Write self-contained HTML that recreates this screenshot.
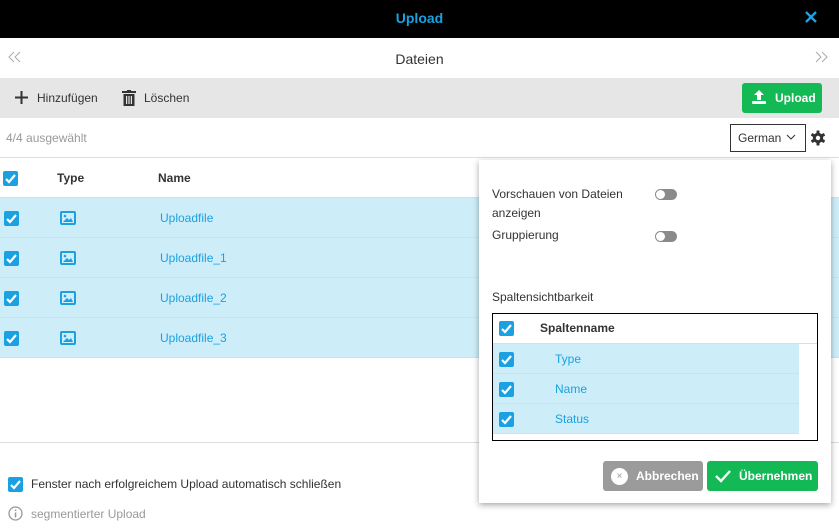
<!DOCTYPE html>
<html><head><meta charset="utf-8"><style>
*{box-sizing:border-box;margin:0;padding:0}
body{width:839px;height:530px;position:relative;overflow:hidden;background:#fff;font-family:"Liberation Sans",sans-serif;font-size:12px;color:#333}
.a{position:absolute}
.cb{position:absolute;width:15px;height:15px;background:#1ba1e2;border-radius:2px}
.cb svg{position:absolute;left:2px;top:2px}
.row{position:absolute;left:0;width:839px;height:40px;background:#cdeef9;border-bottom:1px solid #dcdcdc}
.lnk{color:#1ba1e2}
.tg{position:absolute;width:22px;height:11px;border-radius:6px;background:#8a8a8a}
.tg:after{content:"";position:absolute;left:1px;top:1px;width:9px;height:9px;border-radius:50%;background:#fff}
</style></head><body>
<div class="a" style="left:0;top:0;width:839px;height:38px;background:#000"></div>
<div class="a" style="left:0;top:10px;width:839px;text-align:center;color:#1ba1e2;font-weight:bold;font-size:14px">Upload</div>
<svg class="a" style="left:805px;top:11px" width="12" height="12"><path d="M1 1 L11 11 M11 1 L1 11" stroke="#1ba1e2" stroke-width="2.4"/></svg>
<svg class="a" style="left:8px;top:51px" width="14" height="12"><path d="M6 1 L1 6 L6 11 M12 1 L7 6 L12 11" stroke="#aaa" stroke-width="1" fill="none"/></svg>
<svg class="a" style="left:814px;top:51px" width="14" height="12"><path d="M2 1 L7 6 L2 11 M8 1 L13 6 L8 11" stroke="#aaa" stroke-width="1" fill="none"/></svg>
<div class="a" style="left:0;top:51px;width:839px;text-align:center;font-size:14px;color:#333">Dateien</div>
<div class="a" style="left:0;top:78px;width:839px;height:40px;background:#e6e6e6"></div>
<svg class="a" style="left:15px;top:91px" width="13" height="13"><path d="M6.5 0 V13 M0 6.5 H13" stroke="#333" stroke-width="2"/></svg>
<div class="a" style="left:37px;top:91px;color:#333">Hinzufügen</div>
<svg class="a" style="left:122px;top:90px" width="14" height="16" viewBox="0 0 14 16"><rect x="0" y="1" width="14" height="2" fill="#333"/><rect x="5" y="0" width="4" height="2" fill="#333"/><rect x="1.5" y="4" width="11" height="12" fill="#333"/><rect x="4" y="6" width="1.2" height="8" fill="#e6e6e6"/><rect x="6.4" y="6" width="1.2" height="8" fill="#e6e6e6"/><rect x="8.8" y="6" width="1.2" height="8" fill="#e6e6e6"/></svg>
<div class="a" style="left:144px;top:91px;color:#333">Löschen</div>
<div class="a" style="left:742px;top:83px;width:80px;height:30px;background:#13b955;border-radius:3px"></div>
<svg class="a" style="left:751px;top:89px" width="16" height="16" viewBox="0 0 16 16"><path d="M8 1 L3 6 H6 V11 H10 V6 H13 Z" fill="#fff"/><rect x="1" y="12" width="14" height="3" rx="1" fill="#fff"/></svg>
<div class="a" style="left:775px;top:91px;color:#fff;font-weight:bold">Upload</div>
<div class="a" style="left:6px;top:131px;color:#999">4/4 ausgewählt</div>
<div class="a" style="left:730px;top:124px;width:76px;height:28px;border:1px solid #333"></div>
<div class="a" style="left:738px;top:131px;color:#333">German</div>
<svg class="a" style="left:786px;top:134px" width="10" height="6"><path d="M1 1 L5 5 L9 1" stroke="#333" fill="none"/></svg>
<svg class="a" style="left:810px;top:130px" width="16" height="16" viewBox="0 0 16 16"><g fill="#333"><circle cx="8" cy="8" r="5.2"/><rect x="6.5" y="0.5" width="3" height="15" rx="0.6"/><rect x="6.5" y="0.5" width="3" height="15" rx="0.6" transform="rotate(60 8 8)"/><rect x="6.5" y="0.5" width="3" height="15" rx="0.6" transform="rotate(120 8 8)"/></g><circle cx="8" cy="8" r="2.2" fill="#fff"/></svg>
<div class="a" style="left:0;top:157px;width:839px;height:1px;background:#ddd"></div>
<div class="cb" style="left:3px;top:171px"><svg width="11" height="11"><path d="M1 6 L4 9 L10 2" stroke="#fff" stroke-width="2.2" fill="none"/></svg></div>
<div class="a" style="left:57px;top:171px;font-weight:bold">Type</div>
<div class="a" style="left:158px;top:171px;font-weight:bold">Name</div>
<div class="a" style="left:0;top:197px;width:839px;height:1px;background:#ddd"></div>
<div class="row" style="top:198px"></div><div class="row" style="top:238px"></div><div class="row" style="top:278px"></div><div class="row" style="top:318px"></div>
<div class="cb" style="left:4px;top:211px"><svg width="11" height="11"><path d="M1 6 L4 9 L10 2" stroke="#fff" stroke-width="2.2" fill="none"/></svg></div>
<div class="cb" style="left:4px;top:251px"><svg width="11" height="11"><path d="M1 6 L4 9 L10 2" stroke="#fff" stroke-width="2.2" fill="none"/></svg></div>
<div class="cb" style="left:4px;top:291px"><svg width="11" height="11"><path d="M1 6 L4 9 L10 2" stroke="#fff" stroke-width="2.2" fill="none"/></svg></div>
<div class="cb" style="left:4px;top:331px"><svg width="11" height="11"><path d="M1 6 L4 9 L10 2" stroke="#fff" stroke-width="2.2" fill="none"/></svg></div>
<svg class="a" style="left:60px;top:211px" width="16" height="14"><rect x="1" y="1" width="14" height="12" rx="1" fill="none" stroke="#1ba1e2" stroke-width="2"/><path d="M3 11 L7 7 L9 9 L11 7 L13 11Z" fill="#1ba1e2"/><circle cx="5" cy="5" r="1.3" fill="#1ba1e2"/></svg>
<svg class="a" style="left:60px;top:251px" width="16" height="14"><rect x="1" y="1" width="14" height="12" rx="1" fill="none" stroke="#1ba1e2" stroke-width="2"/><path d="M3 11 L7 7 L9 9 L11 7 L13 11Z" fill="#1ba1e2"/><circle cx="5" cy="5" r="1.3" fill="#1ba1e2"/></svg>
<svg class="a" style="left:60px;top:291px" width="16" height="14"><rect x="1" y="1" width="14" height="12" rx="1" fill="none" stroke="#1ba1e2" stroke-width="2"/><path d="M3 11 L7 7 L9 9 L11 7 L13 11Z" fill="#1ba1e2"/><circle cx="5" cy="5" r="1.3" fill="#1ba1e2"/></svg>
<svg class="a" style="left:60px;top:331px" width="16" height="14"><rect x="1" y="1" width="14" height="12" rx="1" fill="none" stroke="#1ba1e2" stroke-width="2"/><path d="M3 11 L7 7 L9 9 L11 7 L13 11Z" fill="#1ba1e2"/><circle cx="5" cy="5" r="1.3" fill="#1ba1e2"/></svg>
<div class="a lnk" style="left:160px;top:211px">Uploadfile</div>
<div class="a lnk" style="left:160px;top:251px">Uploadfile_1</div>
<div class="a lnk" style="left:160px;top:291px">Uploadfile_2</div>
<div class="a lnk" style="left:160px;top:331px">Uploadfile_3</div>
<div class="a" style="left:0;top:442px;width:839px;height:1px;background:#ddd"></div>
<div class="cb" style="left:8px;top:477px"><svg width="11" height="11"><path d="M1 6 L4 9 L10 2" stroke="#fff" stroke-width="2.2" fill="none"/></svg></div>
<div class="a" style="left:31px;top:477px;color:#333">Fenster nach erfolgreichem Upload automatisch schließen</div>
<svg class="a" style="left:8px;top:506px" width="15" height="15"><circle cx="7.5" cy="7.5" r="6.5" fill="none" stroke="#999" stroke-width="1.3"/><rect x="6.8" y="6.5" width="1.5" height="5" fill="#999"/><rect x="6.8" y="3.5" width="1.5" height="1.5" fill="#999"/></svg>
<div class="a" style="left:31px;top:507px;color:#999">segmentierter Upload</div>

<div class="a" style="left:479px;top:160px;width:352px;height:343px;background:#fff;box-shadow:0 2px 6px rgba(0,0,0,.35)"></div>
<div class="a" style="left:492px;top:185px;line-height:19px;color:#333">Vorschauen von Dateien<br>anzeigen</div>
<div class="tg" style="left:655px;top:189px"></div>
<div class="a" style="left:492px;top:228px;color:#333">Gruppierung</div>
<div class="tg" style="left:655px;top:231px"></div>
<div class="a" style="left:492px;top:290px;color:#333">Spaltensichtbarkeit</div>
<div class="a" style="left:492px;top:313px;width:326px;height:128px;border:1px solid #000"></div>
<div class="cb" style="left:499px;top:321px"><svg width="11" height="11"><path d="M1 6 L4 9 L10 2" stroke="#fff" stroke-width="2.2" fill="none"/></svg></div>
<div class="a" style="left:540px;top:321px;font-weight:bold">Spaltenname</div>
<div class="a" style="left:493px;top:343px;width:324px;height:1px;background:#ddd"></div>
<div class="a" style="left:493px;top:344px;width:306px;height:30px;background:#cdeef9;border-bottom:1px solid #ddd"></div>
<div class="a" style="left:493px;top:374px;width:306px;height:30px;background:#cdeef9;border-bottom:1px solid #ddd"></div>
<div class="a" style="left:493px;top:404px;width:306px;height:30px;background:#cdeef9;border-bottom:1px solid #ddd"></div>
<div class="cb" style="left:499px;top:352px"><svg width="11" height="11"><path d="M1 6 L4 9 L10 2" stroke="#fff" stroke-width="2.2" fill="none"/></svg></div>
<div class="cb" style="left:499px;top:382px"><svg width="11" height="11"><path d="M1 6 L4 9 L10 2" stroke="#fff" stroke-width="2.2" fill="none"/></svg></div>
<div class="cb" style="left:499px;top:412px"><svg width="11" height="11"><path d="M1 6 L4 9 L10 2" stroke="#fff" stroke-width="2.2" fill="none"/></svg></div>
<div class="a lnk" style="left:555px;top:352px">Type</div>
<div class="a lnk" style="left:555px;top:382px">Name</div>
<div class="a lnk" style="left:555px;top:412px">Status</div>
<div class="a" style="left:603px;top:461px;width:100px;height:30px;background:#9b9b9b;border-radius:3px"></div>
<div class="a" style="left:611px;top:468px;width:17px;height:17px;border-radius:50%;background:#fff;color:#999;font-size:10px;text-align:center;line-height:17px">×</div>
<div class="a" style="left:636px;top:469px;color:#fff;font-weight:bold">Abbrechen</div>
<div class="a" style="left:707px;top:461px;width:111px;height:30px;background:#13b955;border-radius:3px"></div>
<svg class="a" style="left:715px;top:469px" width="16" height="14"><path d="M1 7 L6 12 L15 2" stroke="#fff" stroke-width="2.4" fill="none"/></svg>
<div class="a" style="left:739px;top:469px;color:#fff;font-weight:bold">Übernehmen</div>
</body></html>
